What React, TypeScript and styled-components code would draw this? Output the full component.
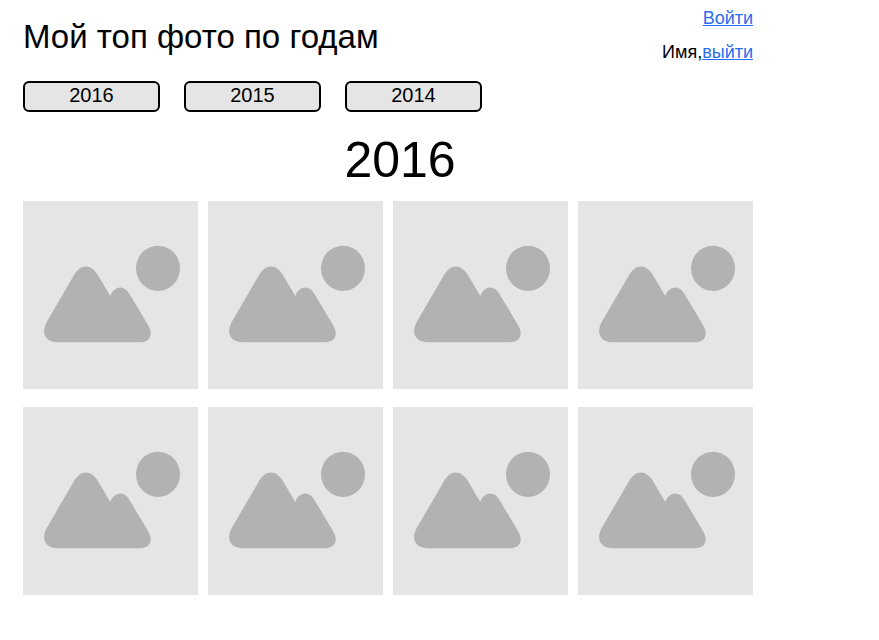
import React from "react";
import styled, { createGlobalStyle } from "styled-components";

const GlobalStyle = createGlobalStyle`
  *, *::before, *::after { box-sizing: border-box; }
  body {
    margin: 0;
    background: #fff;
    color: #000;
    font-family: "Liberation Sans", Arial, sans-serif;
  }
`;

const Page = styled.div`
  max-width: 776px;
  padding: 8px 23px 40px;
`;

const Header = styled.header`
  display: flex;
  justify-content: space-between;
  align-items: flex-start;
`;

const Title = styled.h1`
  margin: 9px 0 0;
  font-size: 33px;
  line-height: 40px;
  font-weight: 400;
`;

const Account = styled.div`
  display: flex;
  flex-direction: column;
  align-items: flex-end;
  gap: 14px;
  font-size: 18px;
  line-height: 20px;
`;

const AccountLink = styled.a`
  color: #2a6df0;
  text-decoration: underline;
`;

const YearNav = styled.nav`
  display: flex;
  flex-wrap: wrap;
  gap: 24px;
  margin-top: 19px;
`;

const YearButton = styled.button`
  width: 137px;
  height: 31px;
  padding: 0 0 3px;
  border: 2px solid #000;
  border-radius: 6px;
  background: #e5e5e5;
  color: #000;
  font: inherit;
  font-size: 20px;
  line-height: 24px;
  cursor: pointer;
`;

const YearTitle = styled.h2`
  margin: 18px 0 11px;
  padding-left: 24px;
  font-size: 50px;
  line-height: 60px;
  font-weight: 400;
  text-align: center;
`;

const Gallery = styled.ul`
  display: grid;
  grid-template-columns: repeat(4, 1fr);
  gap: 18px 10px;
  margin: 0;
  padding: 0;
  list-style: none;
`;

const Photo = styled.li`
  background: #e5e5e5;
`;

const Placeholder = styled.svg`
  display: block;
  width: 100%;
  height: auto;
  fill: #b2b2b2;
`;

const years = [2016, 2015, 2014];
const photos = [1, 2, 3, 4, 5, 6, 7, 8];

export default function App() {
  const [year, setYear] = React.useState(years[0]);

  return (
    <>
      <GlobalStyle />
      <Page>
        <Header>
          <Title>Мой топ фото по годам</Title>
          <Account>
            <AccountLink href="#login">Войти</AccountLink>
            <span>
              Имя,<AccountLink href="#logout">выйти</AccountLink>
            </span>
          </Account>
        </Header>
        <YearNav>
          {years.map((item) => (
            <YearButton key={item} type="button" onClick={() => setYear(item)}>
              {item}
            </YearButton>
          ))}
        </YearNav>
        <main>
          <YearTitle>{year}</YearTitle>
          <Gallery>
            {photos.map((photo) => (
              <Photo key={photo}>
                <Placeholder viewBox="0 0 175 188" aria-hidden="true">
                  <ellipse cx="135" cy="67.3" rx="22" ry="22.6" />
                  <path d="M50.5 75C57 62.2 68.5 62.2 75.5 75L87.3 95C91 84.5 101.5 83.5 106.500 93L125.3 124.5C130.5 134 127 141.3 117 141.3H35C23 141.3 17.5 132.500 23.7 121Z" />
                </Placeholder>
              </Photo>
            ))}
          </Gallery>
        </main>
      </Page>
    </>
  );
}
